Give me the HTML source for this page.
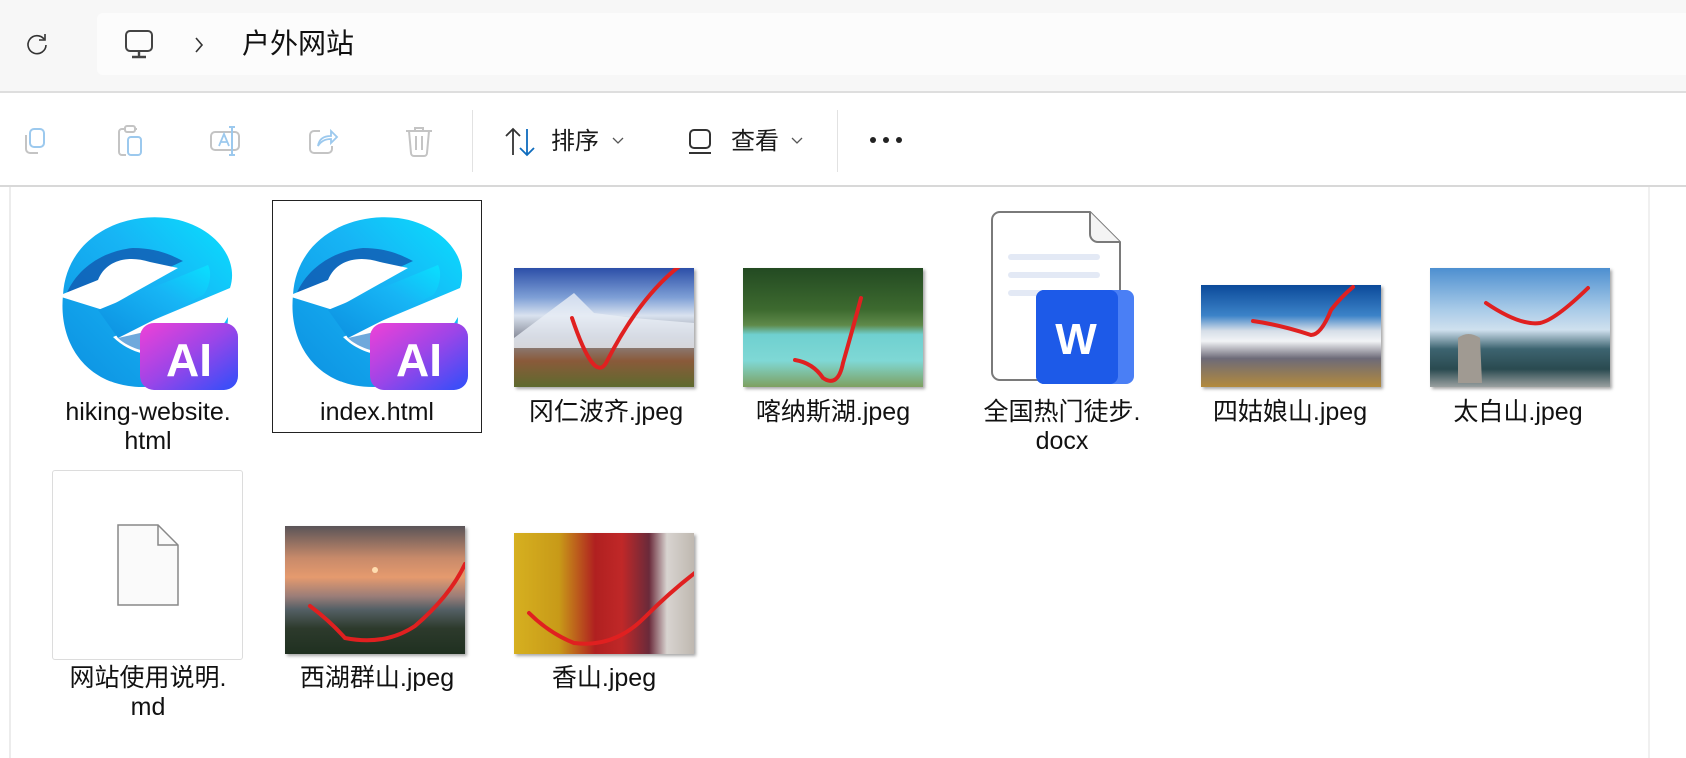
<!DOCTYPE html>
<html><head><meta charset="utf-8"><style>
*{margin:0;padding:0;box-sizing:border-box}
body{width:1686px;height:758px;overflow:hidden;background:#fff;font-family:"Liberation Sans","Noto Sans CJK SC",sans-serif;position:relative;color:#1a1a1a}
.a{position:absolute}
.lbl{position:absolute;width:240px;text-align:center;font-size:25px;line-height:29px;color:#111;white-space:nowrap}
.img{position:absolute;box-shadow:2px 2px 3px rgba(0,0,0,.35);overflow:hidden}
</style></head><body>
<div class="a" style="left:0;top:0;width:1686px;height:91px;background:#f7f7f7"></div>
<div class="a" style="left:97px;top:13px;width:1600px;height:62px;background:#fcfcfc;border-radius:6px"></div>
<div class="a" style="left:0;top:91px;width:1686px;height:2px;background:#dedede"></div>
<div class="a" style="left:0;top:185px;width:1686px;height:2px;background:#d8d8d8"></div>
<svg class="a" style="left:24px;top:31px" width="26" height="26" viewBox="0 0 26 26"><path d="M20 8 A9 9 0 1 0 22 14" fill="none" stroke="#333" stroke-width="1.6"/><path d="M21 3 V9 H15" fill="none" stroke="#333" stroke-width="1.6"/></svg>
<svg class="a" style="left:123px;top:28px" width="32" height="32" viewBox="0 0 32 32"><rect x="3" y="3" width="26" height="20" rx="4" fill="none" stroke="#444" stroke-width="2"/><path d="M16 23v5M9 29h14" stroke="#444" stroke-width="2.4"/></svg>
<svg class="a" style="left:192px;top:36px" width="14" height="18" viewBox="0 0 14 18"><path d="M4 2l6 7-6 7" fill="none" stroke="#333" stroke-width="1.6"/></svg>
<div class="a" style="left:242px;top:25px;font-size:28px;line-height:38px;color:#111">户外网站</div>
<svg class="a" style="left:20px;top:126px" width="32" height="32" viewBox="0 0 32 32"><rect x="10" y="3" width="14" height="18" rx="4" fill="none" stroke="#9cc9ee" stroke-width="2"/><path d="M6 9v14a4 4 0 0 0 4 4h8" fill="none" stroke="#c4c4c4" stroke-width="2"/></svg>
<svg class="a" style="left:115px;top:124px" width="32" height="34" viewBox="0 0 32 34"><path d="M10 5H7a3 3 0 0 0-3 3v20a3 3 0 0 0 3 3h4M20 5h2" fill="none" stroke="#c4c4c4" stroke-width="2"/><rect x="10" y="2" width="10" height="6" rx="2" fill="none" stroke="#c4c4c4" stroke-width="2"/><rect x="13" y="13" width="13" height="18" rx="3" fill="none" stroke="#9cc9ee" stroke-width="2"/></svg>
<svg class="a" style="left:208px;top:124px" width="36" height="34" viewBox="0 0 36 34"><rect x="3" y="8" width="28" height="18" rx="4" fill="none" stroke="#c4c4c4" stroke-width="2"/><path d="M11 22l5-12 5 12M13 18h6" fill="none" stroke="#9cc9ee" stroke-width="1.8"/><path d="M24 3v28M21 3h6M21 31h6" stroke="#9cc9ee" stroke-width="2"/></svg>
<svg class="a" style="left:306px;top:124px" width="34" height="34" viewBox="0 0 34 34"><path d="M14 7H8a4 4 0 0 0-4 4v14a4 4 0 0 0 4 4h14a4 4 0 0 0 4-4v-3" fill="none" stroke="#c4c4c4" stroke-width="2"/><path d="M12 22c1-7 6-10 13-10V7l6 6-6 6v-4c-6 0-10 2-13 7z" fill="none" stroke="#9cc9ee" stroke-width="1.8"/></svg>
<svg class="a" style="left:403px;top:124px" width="32" height="34" viewBox="0 0 32 34"><path d="M3 7h26M12 7V4h8v3M6 7l2 22a3 3 0 0 0 3 3h10a3 3 0 0 0 3-3l2-22M13 12v14M19 12v14" fill="none" stroke="#c4c4c4" stroke-width="2"/></svg>
<div class="a" style="left:472px;top:110px;width:1px;height:62px;background:#e2e2e2"></div>
<svg class="a" style="left:503px;top:126px" width="36" height="32" viewBox="0 0 36 32"><path d="M10 29V3M3 10l7-7 7 7" fill="none" stroke="#333" stroke-width="1.8"/><path d="M24 3v26M17 22l7 7 7-7" fill="none" stroke="#0f6cbd" stroke-width="1.8"/></svg>
<div class="a" style="left:551px;top:126px;font-size:24px;line-height:32px">排序</div>
<svg class="a" style="left:612px;top:137px" width="12" height="8" viewBox="0 0 12 8"><path d="M1 1l5 5 5-5" fill="none" stroke="#555" stroke-width="1.3"/></svg>
<svg class="a" style="left:686px;top:128px" width="28" height="28" viewBox="0 0 28 28"><rect x="4" y="2" width="20" height="18" rx="4" fill="none" stroke="#333" stroke-width="2"/><path d="M3 25h22" stroke="#333" stroke-width="2"/></svg>
<div class="a" style="left:731px;top:126px;font-size:24px;line-height:32px">查看</div>
<svg class="a" style="left:791px;top:137px" width="12" height="8" viewBox="0 0 12 8"><path d="M1 1l5 5 5-5" fill="none" stroke="#555" stroke-width="1.3"/></svg>
<div class="a" style="left:837px;top:110px;width:1px;height:62px;background:#e2e2e2"></div>
<svg class="a" style="left:869px;top:136px" width="34" height="8"><circle cx="4" cy="4" r="3" fill="#222"/><circle cx="17" cy="4" r="3" fill="#222"/><circle cx="30" cy="4" r="3" fill="#222"/></svg>
<div class="a" style="left:9px;top:187px;width:2px;height:571px;background:#ececec"></div>
<div class="a" style="left:1648px;top:187px;width:2px;height:571px;background:#f0f0f0"></div>
<svg width="0" height="0" style="position:absolute"><defs>
<linearGradient id="eg" x1="0" y1="1" x2="1" y2="0"><stop offset="0" stop-color="#0c8fe0"/><stop offset=".6" stop-color="#17b5f5"/><stop offset="1" stop-color="#09e0ff"/></linearGradient>
<linearGradient id="ag" x1="0" y1="0" x2="1" y2="1"><stop offset="0" stop-color="#f041d6"/><stop offset=".5" stop-color="#9b45e8"/><stop offset="1" stop-color="#2d4ffa"/></linearGradient>
<symbol id="edge" viewBox="0 0 180 180">
<path d="M5 85C8 30 60 2 110 8c45 6 72 40 62 70L55 127c30 30 90 25 115-20 0 40-40 70-85 70C30 177 0 135 5 85z" fill="url(#eg)"/>
<path d="M8 85C20 55 50 40 75 38c25 0 40 8 50 13L80 72c-15-15-40-5-50 5z" fill="#1059b0" opacity=".8"/>
<path d="M0 86L40 70C48 50 70 45 92 52L120 58 45 100z" fill="#fff"/>
<path d="M40 100l110-45c5 10 0 25-5 30L60 128z" fill="url(#eg)"/>
<path d="M60 128c10 10 30 15 40 15L95 120z" fill="#0d6fc4" opacity=".6"/>
<rect x="82" y="113" width="98" height="67" rx="14" fill="url(#ag)"/>
<text x="131" y="166" text-anchor="middle" font-family="Liberation Sans,sans-serif" font-weight="bold" font-size="46" fill="#fff">AI</text>
</symbol></defs></svg>
<svg class="a" style="left:58px;top:210px" width="180" height="180"><use href="#edge"/></svg>
<div class="a" style="left:272px;top:200px;width:210px;height:233px;border:1.5px solid #222"></div>
<svg class="a" style="left:288px;top:210px" width="180" height="180"><use href="#edge"/></svg>
<div class="lbl" style="left:28px;top:398px">hiking-website.<br>html</div>
<div class="lbl" style="left:257px;top:398px">index.html</div>
<div class="img" style="left:514px;top:268px;width:180px;height:119px;background:linear-gradient(180deg,#2c4fa8 0%,#7fa0d6 25%,#d9e2ef 40%,#8b8f9c 58%,#8a5a3a 78%,#5e6a2e 100%)">
<svg width="180" height="119"><path d="M0 70 L40 40 L60 25 L80 45 L120 50 L180 55 V80 H0z" fill="#e8eef5" opacity=".8"/><path d="M58 50 Q80 115 92 95 Q130 20 177 -10" fill="none" stroke="#e02020" stroke-width="4" stroke-linecap="round"/></svg></div>
<div class="lbl" style="left:486px;top:398px">冈仁波齐.jpeg</div>
<div class="img" style="left:743px;top:268px;width:180px;height:119px;background:linear-gradient(180deg,#234a22 0%,#3d6a2f 35%,#5f8a4a 48%,#6fd0d0 56%,#7fd8d5 78%,#7ea060 100%)">
<svg width="180" height="119"><path d="M52 92 Q70 95 80 110 Q95 120 100 95 Q110 60 118 30" fill="none" stroke="#e02020" stroke-width="4" stroke-linecap="round"/></svg></div>
<div class="lbl" style="left:713px;top:398px">喀纳斯湖.jpeg</div>
<svg class="a" style="left:990px;top:210px" width="146" height="178" viewBox="0 0 146 178"><path d="M10 2h90l30 30v130a8 8 0 0 1-8 8H10a8 8 0 0 1-8-8V10a8 8 0 0 1 8-8z" fill="#fff" stroke="#7a7a7a" stroke-width="2"/><path d="M100 2v22a8 8 0 0 0 8 8h22" fill="#f4f4f4" stroke="#7a7a7a" stroke-width="2"/><rect x="18" y="44" width="92" height="6" rx="3" fill="#e3e9f5"/><rect x="18" y="62" width="92" height="6" rx="3" fill="#e3e9f5"/><rect x="18" y="80" width="60" height="6" rx="3" fill="#e3e9f5"/><rect x="46" y="80" width="98" height="94" rx="8" fill="#4a7ff5"/><rect x="46" y="80" width="82" height="94" rx="8" fill="#1d5ae8"/><text x="86" y="144" text-anchor="middle" font-family="Liberation Sans,sans-serif" font-weight="bold" font-size="44" fill="#fff">W</text></svg>
<div class="lbl" style="left:942px;top:398px">全国热门徒步.<br>docx</div>
<div class="img" style="left:1201px;top:285px;width:180px;height:102px;background:linear-gradient(180deg,#0b4a9a 0%,#3c83c8 30%,#d6dee8 45%,#f2f4f6 55%,#6d6a78 72%,#b38a3c 100%)">
<svg width="180" height="102"><path d="M52 36 Q80 40 110 50 Q120 50 130 25 Q140 12 152 2" fill="none" stroke="#e02020" stroke-width="4" stroke-linecap="round"/></svg></div>
<div class="lbl" style="left:1170px;top:398px">四姑娘山.jpeg</div>
<div class="img" style="left:1430px;top:268px;width:180px;height:119px;background:linear-gradient(180deg,#4d8fd0 0%,#a9cbe8 35%,#cfe0ee 52%,#3d6470 68%,#2a4a50 85%,#9aa0a0 100%)">
<svg width="180" height="119"><path d="M56 35 Q90 58 110 55 Q125 52 158 20" fill="none" stroke="#e02020" stroke-width="4" stroke-linecap="round"/><path d="M28 70 Q38 62 50 70 L52 115 H28z" fill="#a09a92"/></svg></div>
<div class="lbl" style="left:1398px;top:398px">太白山.jpeg</div>
<div class="a" style="left:52px;top:470px;width:191px;height:190px;border:1px solid #dcdcdc;border-radius:3px"></div>
<svg class="a" style="left:115px;top:523px" width="66" height="86" viewBox="0 0 66 86"><path d="M3 2h40l20 20v60H3z" fill="#fafafa" stroke="#888" stroke-width="1.5"/><path d="M43 2v20h20" fill="none" stroke="#888" stroke-width="1.5"/></svg>
<div class="lbl" style="left:28px;top:664px">网站使用说明.<br>md</div>
<div class="img" style="left:285px;top:526px;width:180px;height:128px;background:linear-gradient(180deg,#5a5458 0%,#c88a6a 25%,#e59a6e 40%,#9a7d78 55%,#556066 65%,#2d3a2c 80%,#1f3020 100%)">
<svg width="180" height="128"><circle cx="90" cy="44" r="3" fill="#ffddb0"/><path d="M25 80 Q45 95 60 112 Q100 120 130 100 Q165 70 180 38" fill="none" stroke="#e02020" stroke-width="4" stroke-linecap="round"/></svg></div>
<div class="lbl" style="left:257px;top:664px">西湖群山.jpeg</div>
<div class="img" style="left:514px;top:533px;width:180px;height:121px;background:linear-gradient(90deg,#d6b020 0%,#c89a18 25%,#b02020 45%,#c02828 60%,#6a2a3a 75%,#d8d4d0 85%,#bfb8b0 100%)">
<svg width="180" height="121"><path d="M15 80 Q35 100 60 110 Q100 115 130 85 Q160 55 190 33" fill="none" stroke="#e02020" stroke-width="4" stroke-linecap="round"/></svg></div>
<div class="lbl" style="left:484px;top:664px">香山.jpeg</div>
</body></html>
